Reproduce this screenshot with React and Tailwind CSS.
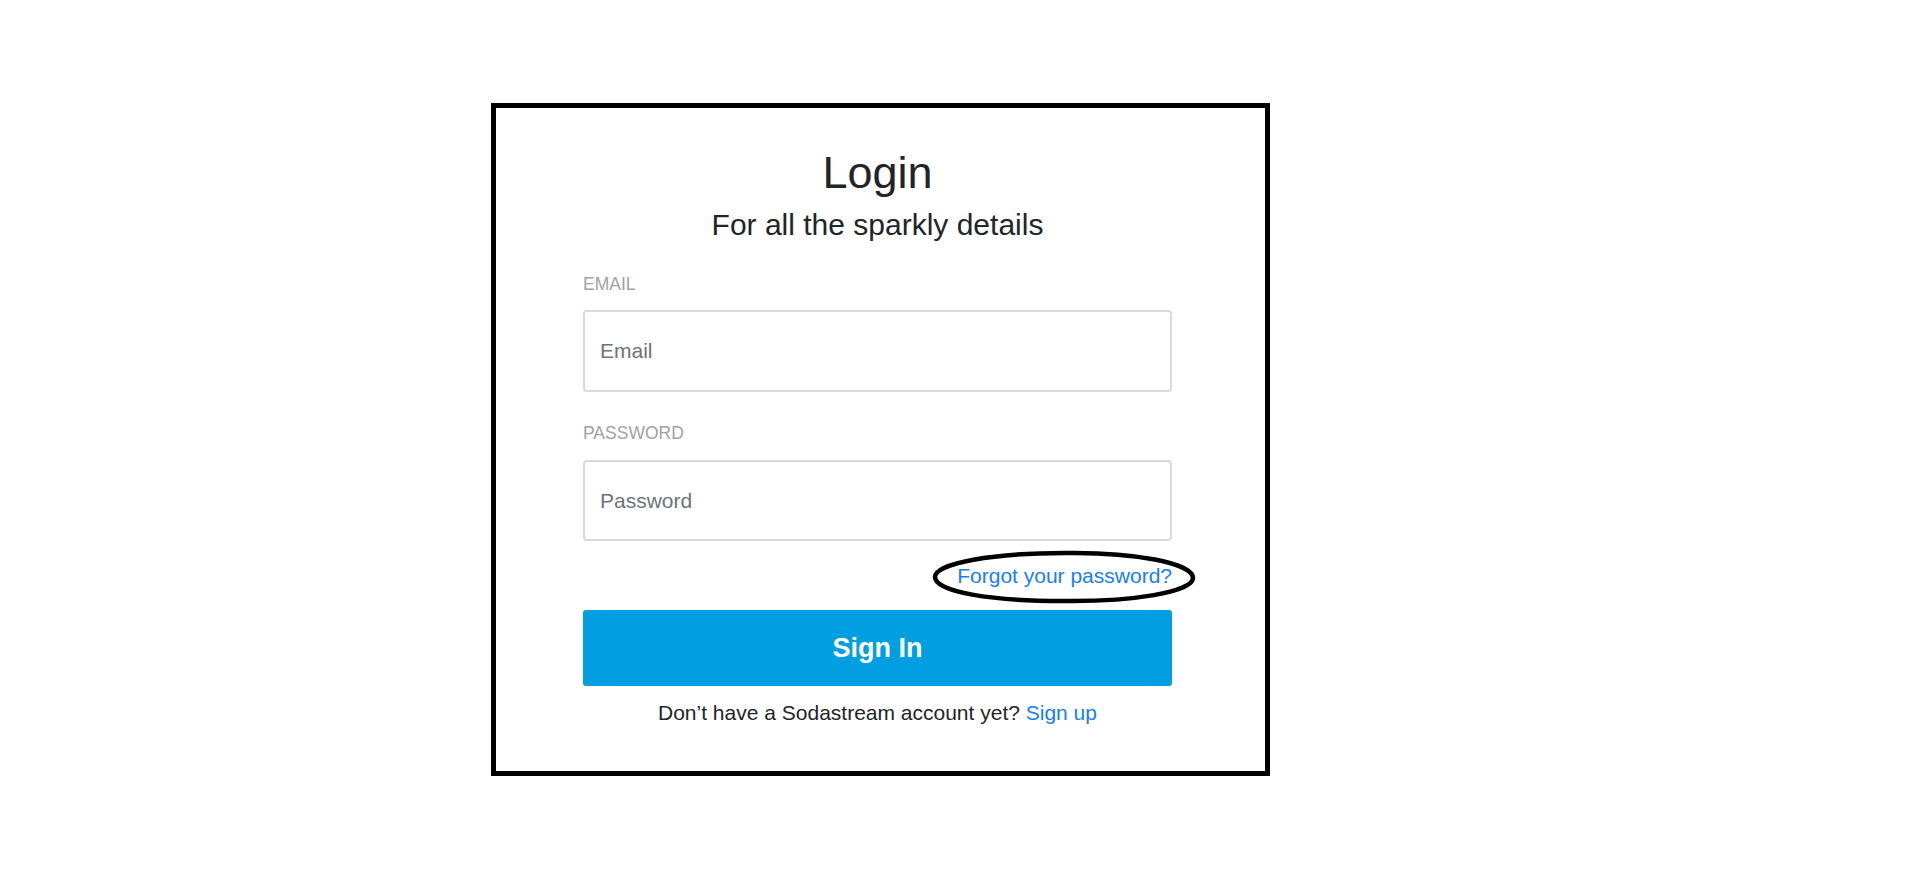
export default function App() {
  return (
    <div className="min-h-[878px] w-full bg-white pl-[491px] pt-[103px]" style={{ fontFamily: '"Liberation Sans", Arial, sans-serif' }}>
      <div className="w-[779px] border-[5px] border-black bg-white pl-[87px] pt-[39px] pb-[46px]">
        <div className="flex w-[589px] flex-col">
          <h1 className="text-center text-[45px] leading-[52px] font-normal text-[#212529]">Login</h1>
          <p className="mt-[9px] text-center text-[30px] leading-[34px] text-[#212529]">For all the sparkly details</p>

          <label className="mt-[32px] text-[17.5px] leading-[20px] text-[#a2a2a2]">EMAIL</label>
          <div className="mt-[16px] flex h-[82px] items-center rounded-[4px] border-2 border-[#d6dae0] px-[15px]">
            <input
              type="text"
              placeholder="Email"
              className="w-full bg-transparent text-[21px] leading-[24px] text-[#212529] outline-none placeholder:text-[#6c737b]"
            />
          </div>

          <label className="mt-[31px] text-[17.5px] leading-[20px] text-[#a2a2a2]">PASSWORD</label>
          <div className="mt-[17px] flex h-[81px] items-center rounded-[4px] border-2 border-[#d6dae0] px-[15px]">
            <input
              type="password"
              placeholder="Password"
              className="w-full bg-transparent text-[21px] leading-[24px] text-[#212529] outline-none placeholder:text-[#6c737b]"
            />
          </div>

          <div className="mt-[23px] flex justify-end">
            <span className="relative text-[21px] leading-[24px] text-[#1a7ef5]">
              Forgot your password?
              <svg
                className="pointer-events-none absolute left-[-25px] top-[-14px]"
                width="264"
                height="54"
                viewBox="0 0 264 54"
                fill="none"
              >
                <path
                  d="M133 3 C 202 2, 261 13, 261 28 C 261 42, 200 52, 130 51 C 60 51, 3 42, 3 27 C 3 13, 62 3, 133 3 Z"
                  stroke="black"
                  strokeWidth="4.5"
                />
              </svg>
            </span>
          </div>

          <button className="mt-[22px] flex h-[76px] w-full items-center justify-center rounded-[3px] bg-[#019fe2] text-[27px] font-bold text-white">
            Sign In
          </button>

          <p className="mt-[15px] text-center text-[21px] leading-[24px] text-[#212529]">
            Don’t have a Sodastream account yet? <span className="text-[#1a7ef5]">Sign up</span>
          </p>
        </div>
      </div>
    </div>
  );
}
